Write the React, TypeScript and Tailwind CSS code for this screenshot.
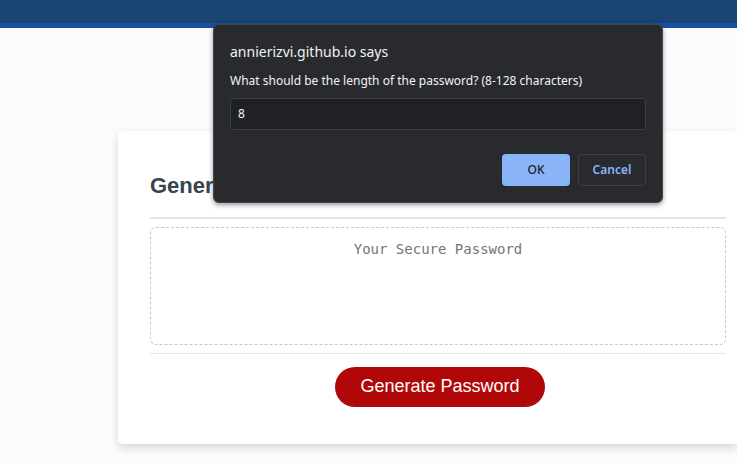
import { useState } from "react";

function PromptDialog() {
  const [length, setLength] = useState("8");
  return (
    <form
      role="dialog"
      aria-labelledby="prompt-title"
      onSubmit={(event) => event.preventDefault()}
      className="absolute left-[213px] top-6 flex w-[450px] flex-col rounded-md border border-[#45464a] bg-[#292a2d] px-4 pt-[15px] pb-4 font-['Noto_Sans','Open_Sans',sans-serif] text-[#f1f3f4] shadow-[0_2px_5px_rgba(0,0,0,0.4)]"
    >
      <h2 id="prompt-title" className="text-sm leading-6">
        annierizvi.github.io says
      </h2>
      <label htmlFor="length" className="mt-[5px] text-xs leading-6">
        What should be the length of the password? (8-128 characters)
      </label>
      <input
        id="length"
        type="text"
        value={length}
        onChange={(event) => setLength(event.target.value)}
        className="mt-[5px] h-8 w-full rounded-[3px] border border-[#3c4043] bg-[#202124] px-[7px] pb-0.5 text-xs outline-none"
      />
      <div className="mt-6 flex justify-end gap-2 text-xs">
        <button type="submit" className="h-8 w-[68px] rounded bg-[#8ab4f8] font-medium text-[#202124]">
          OK
        </button>
        <button type="button" className="h-8 w-[68px] rounded border border-[#3c4043] font-semibold text-[#8ab4f8]">
          Cancel
        </button>
      </div>
    </form>
  );
}

export default function App() {
  return (
    <div className="relative min-h-screen overflow-hidden bg-[#f9fbfd] font-['Liberation_Sans',Arial,sans-serif]">
      <header className="h-7 border-b-[5px] border-[#15529b] bg-[#194473]" />
      <main className="pt-[103px] pb-5 pl-[118px]">
        <section className="rounded-l-[5px] bg-white pt-8 pr-[11px] pb-[37px] pl-8 shadow-[0_4px_8px_rgba(0,0,0,0.14)]">
          <h1 className="border-b-2 border-[#e6e6e6] pt-[9px] pb-[17px] text-[22px] leading-7 font-bold text-[#36454f]">
            Generate a Password
          </h1>
          <div className="border-b border-[#e6e6e6] py-2">
            <textarea
              readOnly
              aria-label="Your Secure Password"
              placeholder="Your Secure Password"
              className="block h-[118px] w-full resize-none rounded-md border border-dashed border-[#c3c7cf] px-4 py-[11px] text-center font-['DejaVu_Sans_Mono',monospace] text-sm leading-5 outline-none placeholder:text-[#757575]"
            />
          </div>
          <div className="flex justify-center pt-[13px] pl-1">
            <button type="button" className="h-10 w-[210px] rounded-full bg-[#b00808] pb-0.5 text-lg text-white">
              Generate Password
            </button>
          </div>
        </section>
      </main>
      <PromptDialog />
    </div>
  );
}
